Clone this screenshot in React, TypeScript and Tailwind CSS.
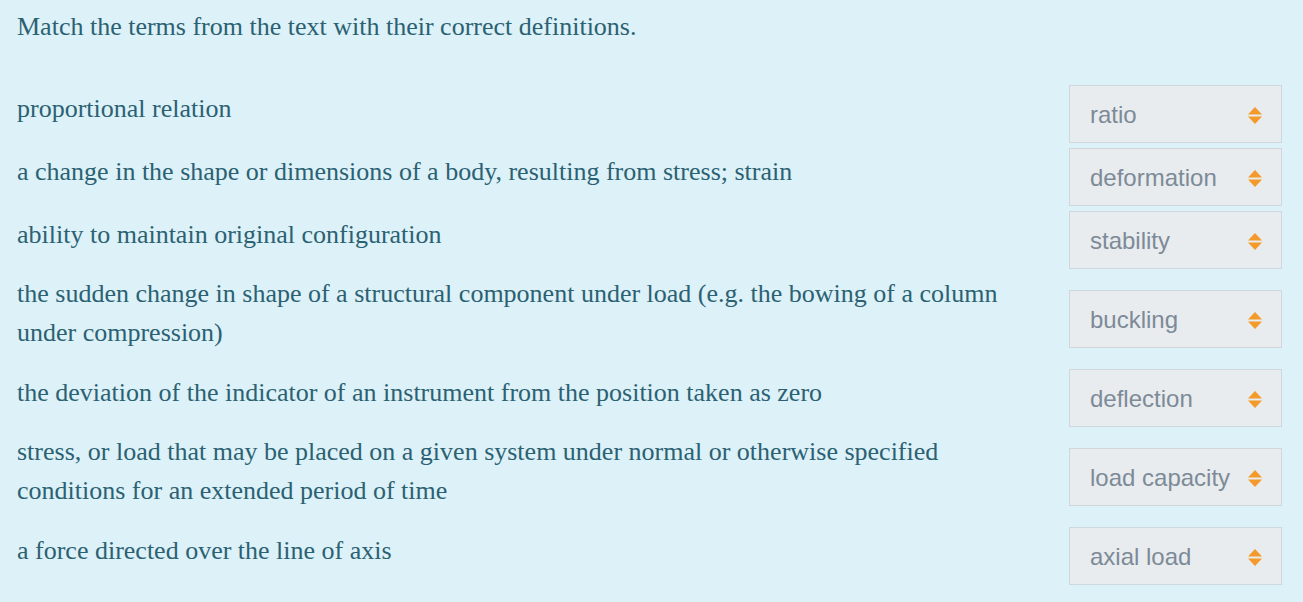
import React from 'react';

const rows: { text: string; answer: string }[] = [
  { text: 'proportional relation', answer: 'ratio' },
  { text: 'a change in the shape or dimensions of a body, resulting from stress; strain', answer: 'deformation' },
  { text: 'ability to maintain original configuration', answer: 'stability' },
  {
    text: 'the sudden change in shape of a structural component under load (e.g. the bowing of a column under compression)',
    answer: 'buckling',
  },
  { text: 'the deviation of the indicator of an instrument from the position taken as zero', answer: 'deflection' },
  {
    text: 'stress, or load that may be placed on a given system under normal or otherwise specified conditions for an extended period of time',
    answer: 'load capacity',
  },
  { text: 'a force directed over the line of axis', answer: 'axial load' },
];

const SortArrows = () => (
  <svg width="14" height="17" viewBox="0 0 14 17" className="shrink-0">
    <path d="M7 0 L14 7.5 L0 7.5 Z" fill="#f39a2b" />
    <path d="M7 17 L14 9.5 L0 9.5 Z" fill="#f39a2b" />
  </svg>
);

export default function App() {
  return (
    <div className="min-h-[602px] w-full bg-[#ddf1f8] pl-[17px] pr-[21px] pt-[7px] font-['Liberation_Serif',serif] text-[26px] text-[#2b6172]">
      <p className="leading-[39px]">Match the terms from the text with their correct definitions.</p>

      <div className="mt-[39px] flex flex-col gap-[5px]">
        {rows.map((r, i) => (
          <div key={i} className="flex items-center">
            <div className="flex-1 pb-3 pr-[40px] leading-[39px]">{r.text}</div>
            <div className="flex h-[58px] w-[213px] shrink-0 items-center justify-between border border-[#cfd7dc] bg-[#e8ecef] pl-[20px] pr-[19px] pt-[2px] font-['Liberation_Sans',sans-serif] text-[24px] text-[#7d8a97]">
              <span>{r.answer}</span>
              <SortArrows />
            </div>
          </div>
        ))}
      </div>
    </div>
  );
}
